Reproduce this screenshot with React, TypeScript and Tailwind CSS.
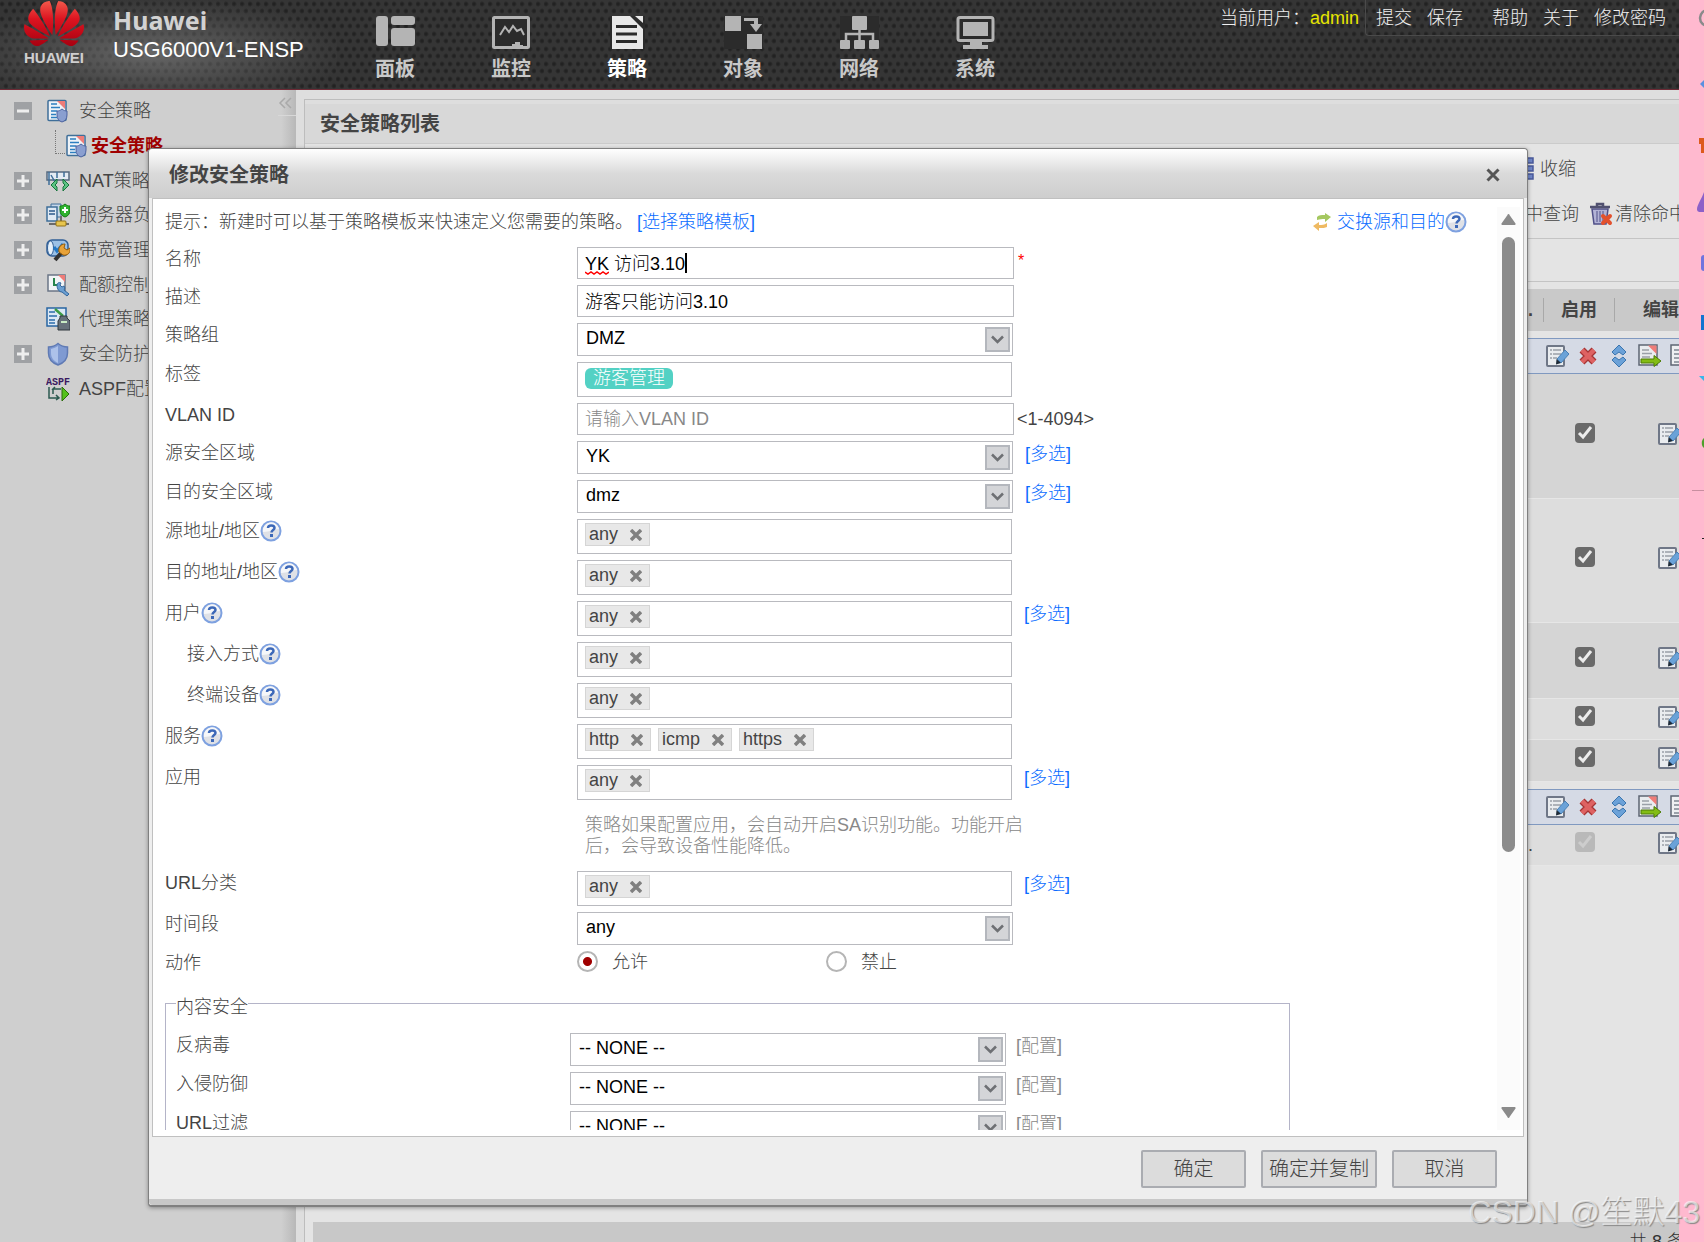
import { useState } from "react";
import type { ReactNode } from "react";
import { SiHuawei } from "react-icons/si";

interface NavItem {
  label: string;
  icon: ReactNode;
  active?: boolean;
}

interface TreeItem {
  label: string;
  icon: ReactNode;
  toggle?: "plus" | "minus";
  child?: boolean;
}

interface RuleRow {
  id: string;
  height: string;
  enabled: boolean;
  dark: boolean;
  note?: string;
}

/* ---------- header icons ---------- */

function PanelIcon() {
  return (
    <svg width="39" height="33" viewBox="0 0 39 33" fill="#b4b4b4">
      <rect x="0" y="0" width="12" height="30" rx="3" />
      <rect x="15" y="0" width="24" height="9" rx="3" />
      <rect x="15" y="12" width="24" height="18" rx="3" />
    </svg>
  );
}

function MonitorIcon() {
  return (
    <svg width="39" height="33" viewBox="0 0 39 33" fill="none">
      <rect x="1.500" y="1.500" width="35" height="30" rx="1" fill="#2b2b2b" stroke="#b4b4b4" strokeWidth="3" />
      <path d="M8 19l5-8 4 5 4-6 4 5 4-2 3 6" stroke="#b4b4b4" strokeWidth="2" />
      <path d="M20 31v-3h3v-2h5v3h3v2z" fill="#b4b4b4" />
    </svg>
  );
}

function PolicyIcon() {
  return (
    <svg width="39" height="33" viewBox="0 0 39 33">
      <rect x="2" width="35" height="33" fill="#2b2b2b" />
      <path d="M4 0h18l13 13v20H4z" fill="#e8e8e8" />
      <path d="M27 0h8v7z" fill="#e8e8e8" />
      <path d="M8 10.500h21M8 18h21M8 25.500h21" stroke="#2b2b2b" strokeWidth="3" />
    </svg>
  );
}

function ObjectIcon() {
  return (
    <svg width="39" height="33" viewBox="0 0 39 33" fill="#b4b4b4">
      <rect width="39" height="33" fill="#2b2b2b" />
      <rect x="1" y="0" width="16" height="15" />
      <rect x="23" y="18" width="15" height="15" />
      <path d="M20 2h14v6h4l-6 8-6-8h4V5H20z" />
    </svg>
  );
}

function NetworkIcon() {
  return (
    <svg width="39" height="33" viewBox="0 0 39 33" fill="#b4b4b4">
      <rect width="39" height="33" fill="#2b2b2b" />
      <rect x="12" y="0" width="15" height="14" rx="1" />
      <path d="M6 25v-7h27v7M19.500 12v13" fill="none" stroke="#b4b4b4" strokeWidth="2.500" />
      <rect x="0" y="24" width="10" height="9" rx="1" />
      <rect x="14" y="24" width="11" height="9" rx="1" />
      <rect x="29" y="24" width="10" height="9" rx="1" />
    </svg>
  );
}

function SystemIcon() {
  return (
    <svg width="39" height="33" viewBox="0 0 39 33" fill="#b4b4b4">
      <rect x="2" y="1.500" width="35" height="23" rx="2" fill="#2b2b2b" stroke="#b4b4b4" strokeWidth="3" />
      <rect x="7" y="6" width="25" height="14" />
      <path d="M14 25h12v4h6v4H7v-4h7z" />
    </svg>
  );
}

/* ---------- tree icons ---------- */

const shieldPath = "M16 10c-2 1.500-3 2-5 2v4c0 4 2 6 5 7 3-1 5-3 5-7v-4c-2 0-3-.5-5-2z";

function SecurityPolicyIcon() {
  return (
    <svg width="24" height="24" viewBox="0 0 24 24" className="shrink-0">
      <rect x="2" y="1.500" width="18" height="20" rx="1" fill="#eef3f8" stroke="#3f6f99" strokeWidth="1.500" />
      <path d="M11 2h8v8z" fill="#ef7c78" />
      <path d="M5 5h6M5 8.500h9M5 12h6M5 15.500h5M5 18.500h6" stroke="#2d7fc0" strokeWidth="1.500" />
      <path d={shieldPath} fill="#8a9fd0" stroke="#4d62a0" />
    </svg>
  );
}

function NatIcon() {
  return (
    <svg width="24" height="24" viewBox="0 0 24 24" className="shrink-0">
      <path d="M1 3h22v8H1z" fill="#e4ebf3" stroke="#566a80" strokeWidth="1.500" />
      <path d="M3 3v13M5 6l4 7M11 3v6M18 3v5" stroke="#3f6f99" strokeWidth="1.500" />
      <path d="M11 10l-6 6 6 6v-4l-2-2 2-2zM17 10l6 6-6 6v-4l2-2-2-2z" fill="#5cc283" stroke="#14753a" />
    </svg>
  );
}

function ServerIcon() {
  return (
    <svg width="24" height="24" viewBox="0 0 24 24" className="shrink-0">
      <path d="M5 1h10v13H5z" fill="#c5d6e8" stroke="#3f6f99" />
      <path d="M1 4h10v14H1z" fill="#dfe9f4" stroke="#3f6f99" strokeWidth="1.500" />
      <path d="M3 8h6M3 11h6" stroke="#2c5a8c" strokeWidth="1.500" />
      <path d="M19 1c-2 1.500-3 2-5 2v4c0 4 2 6 5 7 3-1 5-3 5-7V3c-2 0-3-.5-5-2z" fill="#2fb32f" stroke="#127a12" />
      <path d="M19 4v6M16 7h6" stroke="#fff" strokeWidth="2" />
      <path d="M15 13v7M3 21h20" stroke="#6b6b6b" strokeWidth="2" />
      <rect x="10" y="18" width="10" height="5" rx="1" fill="#e7c54e" stroke="#937216" />
    </svg>
  );
}

function BandwidthIcon() {
  return (
    <svg width="24" height="24" viewBox="0 0 24 24" className="shrink-0">
      <rect x="1" y="2" width="21" height="16" rx="5" fill="#9cc1e6" stroke="#315f96" strokeWidth="1.500" />
      <ellipse cx="4.500" cy="10" rx="3" ry="7" fill="#e5f0fa" stroke="#315f96" />
      <path d="M8 9l3 4 6-7" stroke="#2377c4" strokeWidth="3" fill="none" />
      <path d="M9 22l7-8" stroke="#333" strokeWidth="4" />
      <path d="M13 14c-1-5 2-8 6-8l-1 4 3 2 3-2c1 5-3 8-7 7z" fill="#e8a33a" stroke="#935c0c" />
    </svg>
  );
}

function QuotaIcon() {
  return (
    <svg width="24" height="24" viewBox="0 0 24 24" className="shrink-0">
      <rect x="2" y="2" width="17" height="16" fill="#f2f4f6" stroke="#6b7686" strokeWidth="1.500" />
      <path d="M12 2h7v7z" fill="#ef7c78" />
      <path d="M8 5v7h6" stroke="#28854c" strokeWidth="2" fill="none" />
      <path d="M11 12c0-2 2-3 4-2l-1 2 2 2 2-1c1 1 1 3 0 4l5 4-2 2-5-4c-3 0-5-3-5-7z" fill="#6b9fd2" stroke="#34679c" />
    </svg>
  );
}

function ProxyIcon() {
  return (
    <svg width="24" height="24" viewBox="0 0 24 24" className="shrink-0">
      <rect x="1" y="1" width="19" height="18" fill="#dbe8f5" stroke="#2866a3" strokeWidth="1.500" />
      <path d="M3 5h6M3 9h8M3 13h6M3 16h6" stroke="#2d6cab" strokeWidth="1.500" />
      <path d="M9 2l8 7" stroke="#3b9b45" strokeWidth="2.500" />
      <path d="M14 11v-2h7v2l3 3v9H12v-9z" fill="#66717a" stroke="#30383e" />
      <path d="M15 15h6" stroke="#c8ecc4" strokeWidth="2" />
    </svg>
  );
}

function ShieldIcon() {
  return (
    <svg width="24" height="24" viewBox="0 0 24 24" className="shrink-0">
      <path
        d="M12 1.500C9 4 6 5 2.500 5v6c0 6 4 10 9.500 12 5.500-2 9.500-6 9.500-12V5C18 5 15 4 12 1.500z"
        fill="#7f9ad2"
        stroke="#5f7ab4"
        strokeWidth="1.500"
      />
      <path d="M12 4C9 6 7 6.500 5 7v4c0 5 3 8 7 10z" fill="#adc2ea" />
    </svg>
  );
}

function AspfIcon() {
  return (
    <svg width="24" height="24" viewBox="0 0 24 24" className="shrink-0">
      <text x="0" y="8" fontSize="10" fontWeight="bold" fontFamily="Liberation Mono" fill="#3a1a60">
        ASPF
      </text>
      <path d="M3 10v11h9M7 17v-5h8M10 18l3 3-3 2M9 10l-3 3" stroke="#2c5a50" strokeWidth="1.500" fill="none" />
      <path d="M16 10l7 7-7 7z" fill="#55c11c" stroke="#2a6d0a" />
    </svg>
  );
}

/* ---------- small icons ---------- */

function EditIcon() {
  return (
    <svg width="24" height="24" viewBox="0 0 24 24" className="shrink-0">
      <rect x="2" y="2" width="17" height="20" rx="1" fill="#e9ecef" stroke="#6f7787" strokeWidth="2" />
      <path d="M5 6h2M5 10h2M5 14h2M8 6h8M8 10h8M8 14h4" stroke="#999fa8" strokeWidth="1.500" />
      <path d="M12 15l8-9 4 4-8 9z" fill="#6aa2d8" stroke="#4a80b4" />
      <path d="M11.500 15l4.500 4-5 1.500z" fill="#1d2a38" />
    </svg>
  );
}

function DeleteIcon() {
  return (
    <svg width="24" height="24" viewBox="0 0 24 24" fill="none" className="shrink-0">
      <path d="M6 6l12 12M18 6L6 18" stroke="#a63434" strokeWidth="7" strokeLinejoin="round" />
      <path d="M6 6l12 12M18 6L6 18" stroke="#de6262" strokeWidth="4.500" strokeLinejoin="round" />
    </svg>
  );
}

function MoveIcon() {
  return (
    <svg width="24" height="24" viewBox="0 0 24 24" fill="#6ba1d8" stroke="#3b75ae" className="shrink-0">
      <path d="M12 1l7 7-3 3-4-3-4 3-3-3z" />
      <path d="M12 23l7-7-3-3-4 3-4-3-3 3z" />
    </svg>
  );
}

function ExportIcon() {
  return (
    <svg width="24" height="24" viewBox="0 0 24 24" className="shrink-0">
      <rect x="1" y="1" width="18" height="20" fill="#e9ecef" stroke="#5d6573" strokeWidth="1.500" />
      <path d="M10 1.500h8.500V10z" fill="#ef7c78" />
      <path d="M4 6h7M4 9.500h10M4 13h8" stroke="#9aa0a8" strokeWidth="1.500" />
      <path d="M3 15h13v-3.500l7 5.500-7 5.500V19H3z" fill="#83bd14" stroke="#4d7c06" />
    </svg>
  );
}

function ListIcon() {
  return (
    <svg width="24" height="24" viewBox="0 0 24 24" className="shrink-0">
      <rect x="2" y="1" width="18" height="20" fill="#eef0f2" stroke="#5d6573" strokeWidth="1.500" />
      <path d="M5 6h12M5 10h12M5 14h12M5 18h8" stroke="#7f8793" strokeWidth="1.500" />
    </svg>
  );
}

function TrashIcon() {
  return (
    <svg width="24" height="24" viewBox="0 0 24 24" className="shrink-0">
      <path d="M3 7h16l-2 15H5z" fill="#b3b3d6" stroke="#505088" strokeWidth="1.500" />
      <path d="M8 9v11M11 9v11M14 9v11" stroke="#505088" />
      <path d="M1 5h20M8 4V2h6v2" stroke="#505070" strokeWidth="2.500" fill="none" />
      <path d="M14 14l7 7M21 14l-7 7" stroke="#e2512d" strokeWidth="4" strokeLinecap="round" />
    </svg>
  );
}

function CollapseIcon() {
  return (
    <svg width="24" height="24" viewBox="0 0 24 24" fill="#6f86c8" stroke="#49599a" strokeWidth="1.500">
      <rect x="6" y="1" width="17" height="5" />
      <rect x="6" y="9" width="17" height="5" />
      <rect x="6" y="17" width="17" height="5" />
    </svg>
  );
}

function SwapIcon() {
  return (
    <svg width="22" height="20" viewBox="0 0 22 20">
      <path d="M6 5c2-2 4-2 8-2V1l6 4-6 5V7c-3 0-5 0-8 1z" fill="#a5c860" />
      <path d="M16 15c-2 1-4 1-8 1v3l-6-5 6-4v3c3 0 5 0 8-2z" fill="#efba62" />
    </svg>
  );
}

function HelpButton() {
  return (
    <button type="button" aria-label="help" className="shrink-0">
      <svg width="22" height="22" viewBox="0 0 22 22">
        <circle cx="11" cy="11" r="9.500" fill="#dfe1e6" stroke="#7ea1e0" strokeWidth="2" />
        <path d="M3 12a8 8 0 0 1 16-3c-5 0-9 3-16 3z" fill="#f6f7f9" />
        <path d="M8 8c0-3.500 6.500-3.500 6.500 0 0 2-3 2.200-3 4.500" stroke="#3c68b8" strokeWidth="2.500" fill="none" />
        <rect x="10" y="14" width="3" height="3" fill="#3c68b8" />
      </svg>
    </button>
  );
}

/* ---------- form parts ---------- */

function FormRow({
  label,
  htmlFor,
  help,
  indent,
  children,
}: {
  label: string;
  htmlFor?: string;
  help?: boolean;
  indent?: boolean;
  children: ReactNode;
}) {
  return (
    <div className="flex items-start">
      <div className={`flex h-6 w-[412px] shrink-0 items-center ${indent ? "pl-[22px]" : ""}`}>
        <label htmlFor={htmlFor}>{label}</label>
        {help && <HelpButton />}
      </div>
      {children}
    </div>
  );
}

function SelectBox({ id, value }: { id: string; value: string }) {
  return (
    <div className="relative h-[33px] w-[436px] shrink-0">
      <select
        id={id}
        defaultValue={value}
        className="h-full w-full appearance-none border border-[#b9babf] bg-white pb-[3px] pl-2 text-lg leading-6 text-black"
      >
        <option>{value}</option>
      </select>
      <span className="pointer-events-none absolute top-1 right-[3px] flex size-[25px] items-center justify-center border-2 border-[#b4b7bd] bg-[#d4d5d8]">
        <svg width="13" height="9" viewBox="0 0 13 9" fill="none">
          <path d="M1 1.500l5.500 5.500L12 1.500" stroke="#6e7074" strokeWidth="2.500" />
        </svg>
      </span>
    </div>
  );
}

function TagBox({ id, tags }: { id: string; tags: string[] }) {
  const [items, setItems] = useState(tags);
  return (
    <div className="flex h-[35px] w-[435px] shrink-0 items-start gap-[7px] border border-[#b9babf] bg-white py-[3px] pl-[7px]">
      {items.map((tag) => (
        <span
          key={tag}
          className="flex h-[23px] items-center gap-3 border border-[#d5d5d5] bg-[#e8e8e8] pr-[7px] pl-[3px] leading-5"
        >
          <span className="pb-0.5">{tag}</span>
          <button type="button" aria-label={`remove ${tag}`} onClick={() => setItems(items.filter((t) => t !== tag))}>
            <svg width="12" height="12" viewBox="0 0 12 12">
              <path d="M1 1l10 10M11 1L1 11" stroke="#808080" strokeWidth="3.500" />
            </svg>
          </button>
        </span>
      ))}
      <input id={id} className="h-6 min-w-0 flex-1 bg-transparent outline-none" />
    </div>
  );
}

function MultiLink() {
  return (
    <a href="#multi" className="ml-3 leading-[26px] text-[#0a6cff]">
      [多选]
    </a>
  );
}

function CheckBox({ checked, disabled, label }: { checked: boolean; disabled?: boolean; label: string }) {
  const [on, setOn] = useState(checked);
  return (
    <span className="relative inline-flex size-5 align-middle">
      <input
        type="checkbox"
        aria-label={label}
        checked={on}
        disabled={disabled}
        onChange={(e) => setOn(e.target.checked)}
        className={`size-5 appearance-none rounded-sm ${disabled ? "bg-[#b9b9b9]" : "bg-[#6a6a6a]"}`}
      />
      {on && (
        <svg className="pointer-events-none absolute inset-0" width="20" height="20" viewBox="0 0 20 20" fill="none">
          <path d="M4 10l4 4L16 4" stroke={disabled ? "#cdcdcd" : "#ececec"} strokeWidth="3" />
        </svg>
      )}
    </span>
  );
}

/* ---------- page sections ---------- */

const navItems: NavItem[] = [
  { label: "面板", icon: <PanelIcon /> },
  { label: "监控", icon: <MonitorIcon /> },
  { label: "策略", icon: <PolicyIcon />, active: true },
  { label: "对象", icon: <ObjectIcon /> },
  { label: "网络", icon: <NetworkIcon /> },
  { label: "系统", icon: <SystemIcon /> },
];

function Header() {
  return (
    <header className="relative flex h-[90px] shrink-0 border-b border-[#6e2a35] bg-[#353535] bg-[radial-gradient(circle_at_2px_4px,#222_1px,transparent_3px),radial-gradient(circle_at_6px_11px,#222_1px,transparent_3px)] bg-[length:8px_15px]">
      <div className="flex w-[337px] shrink-0 bg-[radial-gradient(ellipse_at_45%_60%,rgba(150,150,150,0.5),rgba(110,110,110,0.25)_50%,transparent_75%)] pl-6">
        <div className="flex w-[60px] flex-col items-center">
          <svg width="0" height="0" className="absolute">
            <linearGradient id="petal" x1="0" y1="0" x2="0" y2="1">
              <stop offset="0" stopColor="#f2594b" />
              <stop offset="0.4" stopColor="#dc1420" />
              <stop offset="1" stopColor="#a80010" />
            </linearGradient>
          </svg>
          <SiHuawei viewBox="0 3 24 18" className="h-[47px] w-[60px]" fill="url(#petal)" />
          <span className="text-[15px] leading-[22px] font-bold text-[#cfcfcf]">HUAWEI</span>
        </div>
        <div className="flex flex-col pt-[5px] pl-[29px]">
          <span className="font-['Noto_Sans'] text-[25px] leading-[30px] font-bold text-[#d2d2d2]">Huawei</span>
          <span className="text-[22px] leading-[30px] text-white">USG6000V1-ENSP</span>
        </div>
      </div>

      <nav className="flex">
        {navItems.map((item) => (
          <a
            key={item.label}
            href={`#${item.label}`}
            className={`flex w-[116px] flex-col items-center pt-4 text-xl leading-6 font-bold ${
              item.active ? "text-white" : "text-[#c8c8c8]"
            }`}
          >
            {item.icon}
            <span className="pt-2">{item.label}</span>
          </a>
        ))}
      </nav>

      <div className="ml-auto flex h-9 items-center text-lg whitespace-nowrap text-[#f0f0f0]">
        <span>当前用户：</span>
        <span className="text-[#e6e600]">admin</span>
        <div className="ml-1.5 flex h-full items-center rounded-bl border-b border-l border-[#4a4a4a] pr-[13px] pl-2.5">
          <a href="#commit">提交</a>
          <a href="#save" className="ml-[15px]">保存</a>
          <a href="#help" className="ml-[29px]">帮助</a>
          <a href="#about" className="ml-[15px]">关于</a>
          <a href="#password" className="ml-[15px]">修改密码</a>
        </div>
      </div>
    </header>
  );
}

const treeItems: TreeItem[] = [
  { label: "安全策略", icon: <SecurityPolicyIcon />, toggle: "minus" },
  { label: "安全策略", icon: <SecurityPolicyIcon />, child: true },
  { label: "NAT策略", icon: <NatIcon />, toggle: "plus" },
  { label: "服务器负载均衡", icon: <ServerIcon />, toggle: "plus" },
  { label: "带宽管理", icon: <BandwidthIcon />, toggle: "plus" },
  { label: "配额控制策略", icon: <QuotaIcon />, toggle: "plus" },
  { label: "代理策略", icon: <ProxyIcon /> },
  { label: "安全防护", icon: <ShieldIcon />, toggle: "plus" },
  { label: "ASPF配置", icon: <AspfIcon /> },
];

function Sidebar() {
  return (
    <aside className="relative flex w-[296px] shrink-0 flex-col bg-[linear-gradient(to_right,#cfcfcf_0,#cfcfcf_95%,#b8b8b8_100%)] pt-1">
      <ul className="flex h-[312px] flex-col text-lg">
        {treeItems.map((item, i) => (
          <li key={i} className="flex flex-1 items-center">
            {item.child ? (
              <>
                <span className="mb-2 ml-[55px] h-6 w-2.5 border-b border-l border-dotted border-[#777]" />
                {item.icon}
                <a href="#policy" className="ml-0.5 font-bold text-[#a00000]">{item.label}</a>
              </>
            ) : (
              <>
                <span className="flex w-[46px] shrink-0 pl-3.5">
                  {item.toggle && (
                    <button type="button" aria-label="toggle" className="bg-[#9fa1a4]">
                      <svg width="18" height="18" viewBox="0 0 18 18" stroke="#eee" strokeWidth="3">
                        <path d={item.toggle === "plus" ? "M3 9h12M9 3v12" : "M3 9h12"} />
                      </svg>
                    </button>
                  )}
                </span>
                {item.icon}
                <a href="#item" className="ml-[9px] whitespace-nowrap text-[#444]">{item.label}</a>
              </>
            )}
          </li>
        ))}
      </ul>
      <button type="button" aria-label="collapse" className="absolute top-0 right-0 h-[26px] w-[18px] border-b border-[#d8d8d8]">
        <svg width="15" height="12" viewBox="0 0 15 12" fill="none" stroke="#a9a9a9" strokeWidth="1.500">
          <path d="M7 1L2 6l5 5M13 1L8 6l5 5" />
        </svg>
      </button>
    </aside>
  );
}

const rules: RuleRow[] = [
  { id: "rule-1", height: "h-[125px]", enabled: true, dark: true },
  { id: "rule-2", height: "h-[124px]", enabled: true, dark: false },
  { id: "rule-3", height: "h-[76px]", enabled: true, dark: true },
  { id: "rule-4", height: "h-[41px]", enabled: true, dark: false },
  { id: "rule-5", height: "h-[42px]", enabled: true, dark: true },
];

function GroupRow() {
  return (
    <tr className="h-[35px] border-y border-[#8099c0] bg-[#d5dae5]">
      <td colSpan={3} className="p-0">
        <div className="flex items-center justify-end gap-[7px] pr-3.5">
          <EditIcon />
          <DeleteIcon />
          <MoveIcon />
          <ExportIcon />
          <ListIcon />
        </div>
      </td>
    </tr>
  );
}

function RuleLine({ rule }: { rule: RuleRow }) {
  return (
    <tr className={`${rule.height} border-b border-[#e6e6e6] ${rule.dark ? "bg-[#d5d5d5]" : "bg-[#dddddd]"}`}>
      <td className="p-0 pr-2.5 text-right">{rule.note}</td>
      <td className="p-0 pb-2 pl-3 text-center">
        <CheckBox checked disabled={!rule.enabled} label={rule.id} />
      </td>
      <td className="p-0 pb-1 pl-[42px]">
        <EditIcon />
      </td>
    </tr>
  );
}

function PolicyList() {
  return (
    <main className="flex min-w-0 flex-1 flex-col bg-[#dedede] pt-[9px] pl-2">
      <section className="flex flex-1 flex-col overflow-hidden border-t border-l border-[#bdbdbd] bg-[#e4e4e4]">
        <h1 className="h-11 shrink-0 border-t-4 border-b border-t-[#dedede] border-b-[#cbcbcb] bg-[#d8d8d8] pl-[15px] text-xl leading-10 font-bold text-[#444]">
          安全策略列表
        </h1>
        <div className="flex h-[50px] shrink-0 items-center justify-end gap-1.5 pr-[103px] text-lg text-[#444]">
          <CollapseIcon />
          收缩
        </div>
        <div className="flex h-[45px] shrink-0 items-center justify-end overflow-hidden border-b border-[#c4c4c4] pb-1 text-lg whitespace-nowrap text-[#444]">
          <span>命中查询</span>
          <span className="ml-2.5">
            <TrashIcon />
          </span>
          <span className="ml-0.5 w-[64px]">清除命中</span>
        </div>
        <div className="mb-[7px] h-[43px] shrink-0 border-b border-[#c4c4c4]" />
        <div className="ml-2 flex-1 overflow-hidden">
          <table className="w-[calc(100%+28px)] table-fixed border-collapse text-lg text-[#444]">
            <colgroup>
              <col />
              <col className="w-[72px]" />
              <col className="w-[92px]" />
            </colgroup>
            <thead>
              <tr className="h-[42px] bg-[#c9c9c9]">
                <th className="p-0 pr-2.5 text-right">.</th>
                <th className="p-0">
                  <span className="flex h-6 items-center justify-center border-x border-[#a8a8a8]">启用</span>
                </th>
                <th className="p-0">编辑</th>
              </tr>
            </thead>
            <tbody>
              <tr className="h-[7px]">
                <td colSpan={3} className="p-0" />
              </tr>
              <GroupRow />
              {rules.map((rule) => (
                <RuleLine key={rule.id} rule={rule} />
              ))}
              <tr className="h-2 border-t border-[#8099c0]">
                <td colSpan={3} className="p-0" />
              </tr>
              <GroupRow />
              <RuleLine rule={{ id: "default", height: "h-[41px]", enabled: false, dark: false, note: "." }} />
            </tbody>
          </table>
        </div>
        <div className="ml-2 flex h-5 shrink-0 justify-end overflow-hidden bg-[#c8c8c8] pt-2 text-lg leading-6 text-[#333]">
          <span className="w-[50px] whitespace-nowrap">共 8 条</span>
        </div>
      </section>
    </main>
  );
}

function PolicyForm() {
  return (
    <form className="flex flex-col pt-2 pl-3 text-lg text-[#444]" onSubmit={(e) => e.preventDefault()}>
      <div className="flex h-[30px] items-center pr-[30px]">
        <span>提示：新建时可以基于策略模板来快速定义您需要的策略。</span>
        <a href="#template" className="ml-1 text-[#0a6cff]">[选择策略模板]</a>
        <a href="#swap" className="ml-auto flex items-center gap-1 text-[#0a6cff]">
          <SwapIcon />
          交换源和目的
        </a>
        <HelpButton />
      </div>

      <div className="flex flex-col gap-1.5 pt-2.5">
        <FormRow label="名称" htmlFor="name">
          <div className="relative w-[437px] shrink-0">
            <input
              id="name"
              defaultValue="YK 访问3.10"
              spellCheck={false}
              className="h-8 w-full border border-[#b9babf] bg-white pb-0.5 pl-[7px] text-black outline-none"
            />
            <svg className="absolute bottom-1 left-2" width="24" height="4" viewBox="0 0 24 4" fill="none">
              <path d="M0 1l3 2 3-2 3 2 3-2 3 2 3-2 3 2 3-2" stroke="#f00" strokeWidth="1.500" />
            </svg>
            <span className="absolute top-1.5 left-[108px] h-5 w-0.5 bg-black" />
          </div>
          <span className="ml-1 text-base leading-7 text-[#f00]">*</span>
        </FormRow>
        <FormRow label="描述" htmlFor="desc">
          <input
            id="desc"
            defaultValue="游客只能访问3.10"
            className="h-8 w-[437px] border border-[#b9babf] bg-white pb-0.5 pl-[7px] text-black"
          />
        </FormRow>
        <FormRow label="策略组" htmlFor="group">
          <SelectBox id="group" value="DMZ" />
        </FormRow>
        <FormRow label="标签" htmlFor="tag">
          <div className="flex h-[35px] w-[435px] items-start border border-[#b9babf] bg-white pt-[5px] pl-[7px]">
            <span className="rounded-md bg-[#53d1c4] px-2 leading-[21px] text-white">游客管理</span>
            <input id="tag" className="h-6 min-w-0 flex-1 bg-transparent outline-none" />
          </div>
        </FormRow>
        <FormRow label="VLAN ID" htmlFor="vlan">
          <input
            id="vlan"
            placeholder="请输入VLAN ID"
            className="h-8 w-[437px] border border-[#b9babf] bg-white pl-[7px] placeholder:text-[#888]"
          />
          <span className="ml-[3px] leading-8">&lt;1-4094&gt;</span>
        </FormRow>
        <FormRow label="源安全区域" htmlFor="src-zone">
          <SelectBox id="src-zone" value="YK" />
          <MultiLink />
        </FormRow>
        <FormRow label="目的安全区域" htmlFor="dst-zone">
          <SelectBox id="dst-zone" value="dmz" />
          <MultiLink />
        </FormRow>
        <FormRow label="源地址/地区" htmlFor="src-addr" help>
          <TagBox id="src-addr" tags={["any"]} />
        </FormRow>
        <FormRow label="目的地址/地区" htmlFor="dst-addr" help>
          <TagBox id="dst-addr" tags={["any"]} />
        </FormRow>
        <FormRow label="用户" htmlFor="user" help>
          <TagBox id="user" tags={["any"]} />
          <MultiLink />
        </FormRow>
        <FormRow label="接入方式" htmlFor="access" help indent>
          <TagBox id="access" tags={["any"]} />
        </FormRow>
        <FormRow label="终端设备" htmlFor="device" help indent>
          <TagBox id="device" tags={["any"]} />
        </FormRow>
        <FormRow label="服务" htmlFor="service" help>
          <TagBox id="service" tags={["http", "icmp", "https"]} />
        </FormRow>
        <FormRow label="应用" htmlFor="app">
          <TagBox id="app" tags={["any"]} />
          <MultiLink />
        </FormRow>
        <p className="ml-[420px] w-[450px] pt-[9px] pb-2 leading-[21px] text-[#888]">
          策略如果配置应用，会自动开启SA识别功能。功能开启后，会导致设备性能降低。
        </p>
        <FormRow label="URL分类" htmlFor="url-cat">
          <TagBox id="url-cat" tags={["any"]} />
          <MultiLink />
        </FormRow>
        <FormRow label="时间段" htmlFor="schedule">
          <SelectBox id="schedule" value="any" />
        </FormRow>
        <FormRow label="动作">
          {["允许", "禁止"].map((action, i) => (
            <label key={action} className="flex h-[21px] w-[249px] items-center gap-3.5">
              <input
                type="radio"
                name="action"
                defaultChecked={i === 0}
                className="size-[21px] appearance-none rounded-full border-2 border-[#b5b5b5] bg-white checked:bg-[radial-gradient(circle,#a00000_4px,white_5px)]"
              />
              {action}
            </label>
          ))}
        </FormRow>
      </div>

      <fieldset className="mt-3 w-[1125px] border border-[#b4b4c8] pl-2.5">
        <legend className="pt-2 leading-6">内容安全</legend>
        <div className="flex flex-col gap-1.5 pt-3.5">
          {["反病毒", "入侵防御", "URL过滤"].map((label, i) => (
            <div key={label} className="flex items-start">
              <label htmlFor={`profile-${i}`} className="w-[394px] leading-6">{label}</label>
              <SelectBox id={`profile-${i}`} value="-- NONE --" />
              <a href="#config" className="ml-2.5 leading-[26px] text-[#888]">[配置]</a>
            </div>
          ))}
        </div>
      </fieldset>
    </form>
  );
}

function PolicyDialog() {
  return (
    <div className="absolute inset-0 flex pt-[148px] pr-[151px] pb-[35px] pl-[148px]">
      <div
        role="dialog"
        aria-label="修改安全策略"
        className="flex min-w-0 flex-1 flex-col rounded border border-[#808080] border-b-2 bg-[#eeeeee] shadow-[0_1px_4px_rgba(0,0,0,0.35)]"
      >
        <div className="flex h-[49px] shrink-0 items-center justify-between rounded-t bg-linear-to-b from-white via-[#dadada] to-[#cecece] pt-0.5 pr-[27px] pl-5">
          <h2 className="text-xl font-bold text-[#444]">修改安全策略</h2>
          <button type="button" aria-label="close">
            <svg width="14" height="14" viewBox="0 0 14 14">
              <path d="M1.500 1.500l11 11M12.500 1.500l-11 11" stroke="#555" strokeWidth="3" />
            </svg>
          </button>
        </div>
        <div className="mx-[3px] flex min-h-0 flex-1 border border-[#c0c0c0] bg-white pb-1.5">
          <div className="min-w-0 flex-1 overflow-hidden">
            <PolicyForm />
          </div>
          <div className="mt-2 mr-[3px] flex w-[23px] shrink-0 flex-col items-center bg-[#fbfbfb] pt-[7px] pb-3">
            <svg width="15" height="11" viewBox="0 0 15 11" fill="#8a8a8a">
              <path d="M6.500 1a1 1 0 0 1 2 0l6 8.500a1 1 0 0 1-1 1.500h-12a1 1 0 0 1-1-1.500z" />
            </svg>
            <div className="mt-3 mb-auto h-[68%] w-[13px] rounded-full bg-[#8b8b8b]" />
            <svg width="15" height="11" viewBox="0 0 15 11" fill="#8a8a8a">
              <path d="M6.500 10a1 1 0 0 0 2 0l6-8.500a1 1 0 0 0-1-1.500h-12a1 1 0 0 0-1 1.500z" />
            </svg>
          </div>
        </div>
        <div className="flex h-[62px] shrink-0 items-center justify-end gap-[15px] pt-0.5 pr-[30px] text-xl text-[#444]">
          {["确定", "确定并复制", "取消"].map((text) => (
            <button
              key={text}
              type="button"
              className="h-[38px] min-w-[105px] rounded-xs border-2 border-[#aaacb1] bg-[#dcdcdc] px-1.5"
            >
              {text}
            </button>
          ))}
        </div>
        <div className="h-1.5 shrink-0 rounded-b bg-[#c8c8c8]" />
      </div>
    </div>
  );
}

function Dock() {
  return (
    <div className="w-[25px] shrink-0 overflow-hidden bg-[#ffb9cf]">
      <svg width="25" height="560" viewBox="0 0 25 560" fill="none">
        <circle cx="29" cy="18" r="8" stroke="#8a8a8a" strokeWidth="2.500" />
        <path d="M21 84l4-4v8z" fill="#5a90e0" />
        <path d="M20 138h5v15h-3v-9h-2z" fill="#dd5a1c" />
        <path d="M25 192c-2 6-7 13-7 17s4 3 7 3z" fill="#8c60c8" />
        <rect x="22" y="255" width="10" height="16" rx="3" fill="#6f74de" />
        <rect x="22" y="315" width="10" height="15" fill="#1274d0" />
        <path d="M20 376h5v5z" fill="#36b6ea" />
        <path d="M25 438c-3 2-3 8 0 10z" fill="#4fa02a" />
        <path d="M13 490.500h12" stroke="#c88ea0" />
        <path d="M23 538.500h2" stroke="#222" />
      </svg>
    </div>
  );
}

export default function App() {
  return (
    <div className="relative flex h-screen overflow-hidden font-['Liberation_Sans','Noto_Sans_CJK_SC',sans-serif] font-light">
      <div className="relative flex min-w-0 flex-1 flex-col">
        <Header />
        <div className="flex min-h-0 flex-1">
          <Sidebar />
          <PolicyList />
        </div>
        <PolicyDialog />
      </div>
      <Dock />
      {/* watermark */}
      <div className="pointer-events-none absolute right-1 bottom-2.5 text-[32px] leading-10 whitespace-nowrap text-white/60 [text-shadow:1px_1px_1px_#888]">
        CSDN @笙默43
      </div>
    </div>
  );
}
